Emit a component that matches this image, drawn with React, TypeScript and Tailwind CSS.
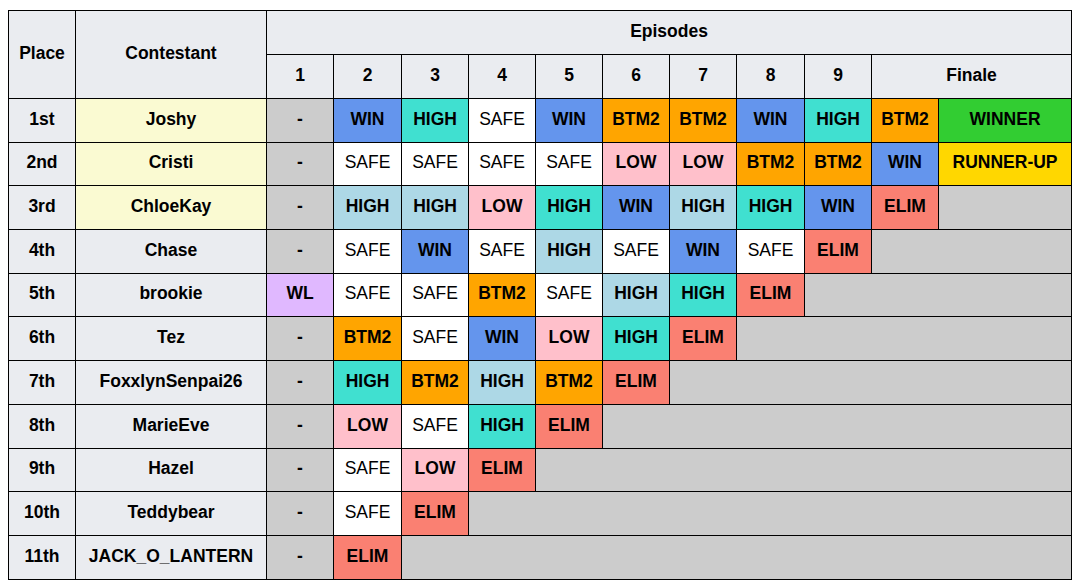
type Cell = { t: string; c: string; span?: number };

const C: Record<string, string> = {
  "-": "bg-[#cccccc] font-bold",
  WIN: "bg-[#6495ed] font-bold",
  HIGH: "bg-[#40e0d0] font-bold",
  HIGHL: "bg-[#add8e6] font-bold",
  SAFE: "bg-white font-normal",
  BTM2: "bg-[#ffa500] font-bold",
  LOW: "bg-[#ffc0cb] font-bold",
  ELIM: "bg-[#fa8072] font-bold",
  WINNER: "bg-[#32cd32] font-bold",
  "RUNNER-UP": "bg-[#ffd700] font-bold",
  WL: "bg-[#e0b8ff] font-bold",
  GREY: "bg-[#cccccc]",
};

function parse(items: string[]): Cell[] {
  return items.map((s) => {
    if (s.startsWith("GREY")) {
      return { t: "", c: C.GREY, span: Number(s.slice(4)) };
    }
    if (s === "HIGHL") return { t: "HIGH", c: C.HIGHL };
    return { t: s, c: C[s] };
  });
}

const rows: { place: string; name: string; top?: boolean; cells: Cell[] }[] = [
  { place: "1st", name: "Joshy", top: true, cells: parse(["-", "WIN", "HIGH", "SAFE", "WIN", "BTM2", "BTM2", "WIN", "HIGH", "BTM2", "WINNER"]) },
  { place: "2nd", name: "Cristi", top: true, cells: parse(["-", "SAFE", "SAFE", "SAFE", "SAFE", "LOW", "LOW", "BTM2", "BTM2", "WIN", "RUNNER-UP"]) },
  { place: "3rd", name: "ChloeKay", top: true, cells: parse(["-", "HIGHL", "HIGHL", "LOW", "HIGH", "WIN", "HIGHL", "HIGH", "WIN", "ELIM", "GREY1"]) },
  { place: "4th", name: "Chase", cells: parse(["-", "SAFE", "WIN", "SAFE", "HIGHL", "SAFE", "WIN", "SAFE", "ELIM", "GREY2"]) },
  { place: "5th", name: "brookie", cells: parse(["WL", "SAFE", "SAFE", "BTM2", "SAFE", "HIGHL", "HIGH", "ELIM", "GREY3"]) },
  { place: "6th", name: "Tez", cells: parse(["-", "BTM2", "SAFE", "WIN", "LOW", "HIGH", "ELIM", "GREY4"]) },
  { place: "7th", name: "FoxxlynSenpai26", cells: parse(["-", "HIGH", "BTM2", "HIGHL", "BTM2", "ELIM", "GREY5"]) },
  { place: "8th", name: "MarieEve", cells: parse(["-", "LOW", "SAFE", "HIGH", "ELIM", "GREY6"]) },
  { place: "9th", name: "Hazel", cells: parse(["-", "SAFE", "LOW", "ELIM", "GREY7"]) },
  { place: "10th", name: "Teddybear", cells: parse(["-", "SAFE", "ELIM", "GREY8"]) },
  { place: "11th", name: "JACK_O_LANTERN", cells: parse(["-", "ELIM", "GREY9"]) },
];

const widths = [67, 191, 67, 68, 67, 67, 67, 67, 67, 68, 67, 67, 133];

export default function App() {
  const td = "border border-black text-center p-0 pb-[3px]";
  const th = "border border-black text-center p-0 pb-[3px] bg-[#eaecf0] font-bold";
  return (
    <div className="min-h-[587px] bg-white pt-[10px] pl-[8px] font-['Liberation_Sans',Arial,sans-serif] text-[17.5px] text-black">
      <table className="table-fixed border-collapse w-[1064px]">
        <colgroup>
          {widths.map((w, i) => (
            <col key={i} style={{ width: w }} />
          ))}
        </colgroup>
        <thead>
          <tr className="h-[44px]">
            <th rowSpan={2} className={th}>Place</th>
            <th rowSpan={2} className={th}>Contestant</th>
            <th colSpan={11} className={th}>Episodes</th>
          </tr>
          <tr className="h-[44px]">
            {["1", "2", "3", "4", "5", "6", "7", "8", "9"].map((n) => (
              <th key={n} className={th}>{n}</th>
            ))}
            <th colSpan={2} className={th}>Finale</th>
          </tr>
        </thead>
        <tbody>
          {rows.map((r) => (
            <tr key={r.place} className="h-[43.7px]">
              <td className={`${td} bg-[#eaecf0] font-bold`}>{r.place}</td>
              <td className={`${td} font-bold ${r.top ? "bg-[#fafad2]" : "bg-[#eaecf0]"}`}>{r.name}</td>
              {r.cells.map((c, i) => (
                <td key={i} colSpan={c.span} className={`${td} ${c.c}`}>
                  {c.t}
                </td>
              ))}
            </tr>
          ))}
        </tbody>
      </table>
    </div>
  );
}
